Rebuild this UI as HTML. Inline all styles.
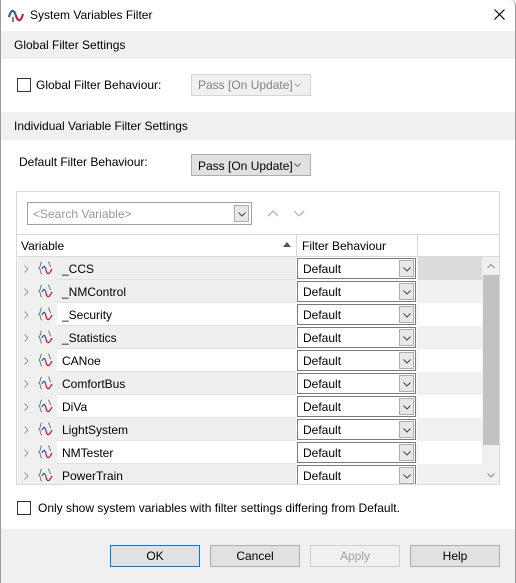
<!DOCTYPE html>
<html><head><style>
*{box-sizing:border-box;margin:0;padding:0}
body{width:516px;height:583px;position:relative;background:#fff;font-family:"Liberation Sans",sans-serif;font-size:12px;color:#000;overflow:hidden}
.a{position:absolute}
.sec{position:absolute;left:1px;width:514px;background:#f0f0f0;padding-left:13px;line-height:28px;font-size:12px}
.cb{position:absolute;width:14px;height:14px;border:1px solid #333;background:#fff}
.combo{position:absolute;border:1px solid #adadad;background:#e1e1e1;line-height:20px;padding-left:6px}
.btn{position:absolute;top:545px;width:90px;height:22px;border:1px solid #adadad;background:#e1e1e1;text-align:center;line-height:20px}
.row{position:absolute;left:18px;width:464px;height:23px;background:#f0f0f0}
.name{position:absolute;left:39px;width:239px;top:0;height:23px;line-height:24px;padding-left:5px}
.fb{position:absolute;left:279px;top:1px;width:119px;height:21px;border:1px solid #7a7a7a;background:#fff;line-height:21px;padding-left:5px}
.fb i{position:absolute;right:1px;top:1px;width:15px;height:17px;border:1px solid #adadad;background:#e8e8e8}
.fb svg,.dd svg{position:absolute;left:3px;top:6px}
.ic{position:absolute;left:20px;top:4px}
</style></head><body>
<div class="a" style="left:0;top:0;width:516px;height:583px;border:1px solid #9a9a9a;border-top:none;border-radius:0 6px 0 0"></div>
<svg class="a" style="left:8px;top:8px" width="16" height="16" viewBox="0 0 16 16"><path d="M1 9 C3 1,6 1,8 8 C10 14,13 14,15 6" stroke="#c8102e" stroke-width="2" fill="none"/><path d="M1 9 C3 1,6 1,8 8" stroke="#2b5fa8" stroke-width="2" fill="none"/><path d="M5 9v5" stroke="#555" stroke-width="1.5"/></svg>
<div class="a" style="left:30px;top:8px;font-size:12px">System Variables Filter</div>
<svg class="a" style="left:494px;top:9px" width="11" height="11"><path d="M0.5 0.5L10.5 10.5M10.5 0.5L0.5 10.5" stroke="#000" stroke-width="1.2"/></svg>

<div class="sec" style="top:31px;height:28px">Global Filter Settings</div>
<div class="cb" style="left:17px;top:78px"></div>
<div class="a" style="left:36px;top:78px">Global Filter Behaviour:</div>
<div class="combo" style="left:191px;top:74px;width:120px;height:22px;background:#f0f0f0;border-color:#d4d4d4;color:#838383">Pass [On Update]<svg class="a" style="right:9px;top:8px" width="7" height="4"><path d="M0.5 0.5l3 3 3-3" stroke="#aaa" fill="none"/></svg></div>

<div class="sec" style="top:112px;height:28px">Individual Variable Filter Settings</div>
<div class="a" style="left:19px;top:155px">Default Filter Behaviour:</div>
<div class="combo" style="left:191px;top:154px;width:120px;height:22px;line-height:22px">Pass [On Update]<svg class="a" style="right:9px;top:8px" width="7" height="4"><path d="M0.5 0.5l3 3 3-3" stroke="#666" fill="none"/></svg></div>

<div class="a" style="left:16px;top:191px;width:484px;height:294px;border:1px solid #d9d9d9;background:#fff"></div>
<div class="a dd" style="left:27px;top:202px;width:225px;height:23px;border:1px solid #a0a0a0;background:#fff;color:#999;padding-left:5px;line-height:22px">&lt;Search Variable&gt;<span class="a" style="right:2px;top:2px;width:15px;height:17px;border:1px solid #adadad;background:#e8e8e8"><svg width="8" height="5"><path d="M0.5 0.5l3.5 3.5 3.5-3.5" stroke="#444" fill="none"/></svg></span></div>
<svg class="a" style="left:267px;top:208px" width="40" height="10"><path d="M1 8l5-5 5 5M27 3l5 5 5-5" stroke="#b5b5b5" stroke-width="1.3" fill="none"/></svg>

<div class="a" style="left:17px;top:234px;width:482px;height:23px;border-top:1px solid #d9d9d9;border-bottom:1px solid #d9d9d9;background:#fff"></div>
<div class="a" style="left:21px;top:239px">Variable</div>
<svg class="a" style="left:283px;top:242px" width="8" height="5"><path d="M0 5L4 0L8 5Z" fill="#555"/></svg>
<div class="a" style="left:296px;top:235px;width:1px;height:22px;background:#d9d9d9"></div>
<div class="a" style="left:302px;top:239px">Filter Behaviour</div>
<div class="a" style="left:417px;top:235px;width:1px;height:22px;background:#d9d9d9"></div>

<div id="rows"></div>
<script>
var n=["_CCS","_NMControl","_Security","_Statistics","CANoe","ComfortBus","DiVa","LightSystem","NMTester","PowerTrain"];
var g=[1,1,0,1,0,1,0,1,0,1];
var h="";
for(var i=0;i<n.length;i++){
 var t=257+i*23;
 h+='<div class="row" style="top:'+t+'px;height:'+Math.min(23,484-t)+'px;overflow:hidden">'+
 '<svg class="a" style="left:6px;top:8px" width="5" height="8"><path d="M0.5 0.5l3.5 3.5-3.5 3.5" stroke="#999" fill="none"/></svg>'+
 '<svg class="ic" width="16" height="16" viewBox="0 0 16 16"><path d="M4 1C2 1 3 6 1 7C3 8 2 13 4 13M10 1C12 1 11 5 13 6" stroke="#777" fill="none"/><path d="M4 8C6 4 7 5 8 9" stroke="#2b5fa8" stroke-width="1.3" fill="none"/><path d="M8 9C9 14 11 14 14 8" stroke="#d0102e" stroke-width="1.3" fill="none"/></svg>'+
 '<div class="name" style="background:'+(g[i]?'#efefef':'#fff')+';border-bottom:1px solid #e0e0e0">'+n[i]+'</div>'+
 '<div class="a" style="left:278px;top:0;width:121px;height:23px;background:#fff"></div>'+
 '<div class="fb">Default<i><svg width="8" height="5"><path d="M0.5 0.5l3.5 3.5 3.5-3.5" stroke="#444" fill="none"/></svg></i></div>'+
 '<div class="a" style="left:400px;top:0;width:64px;height:23px;background:'+(i==0?'#dcdcdc':(g[i]?'#f0f0f0':'#fff'))+'"></div>'+
 '</div>';
}
document.getElementById("rows").innerHTML=h;
</script>
<div class="a" style="left:482px;top:257px;width:17px;height:227px;background:#f0f0f0"></div>
<div class="a" style="left:483px;top:275px;width:16px;height:170px;background:#c2c2c2"></div>
<svg class="a" style="left:487px;top:264px" width="8" height="5"><path d="M0.5 4l3.5-3.5 3.5 3.5" stroke="#888" fill="none"/></svg>
<svg class="a" style="left:487px;top:473px" width="8" height="5"><path d="M0.5 0.5l3.5 3.5 3.5-3.5" stroke="#888" fill="none"/></svg>

<div class="cb" style="left:17px;top:501px"></div>
<div class="a" style="left:38px;top:501px">Only show system variables with filter settings differing from Default.</div>

<div class="a" style="left:1px;top:529px;width:514px;height:54px;background:#f0f0f0"></div>
<div class="btn" style="left:110px;border-color:#0078d7">OK</div>
<div class="btn" style="left:210px">Cancel</div>
<div class="btn" style="left:310px;background:#f0f0f0;border-color:#cfcfcf;color:#a0a0a0">Apply</div>
<div class="btn" style="left:410px">Help</div>
</body></html>
